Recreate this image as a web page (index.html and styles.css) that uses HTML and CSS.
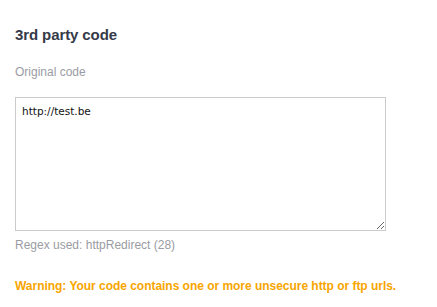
FILE: index.html
```html
<!DOCTYPE html>
<html>
<head>
<meta charset="utf-8">
<link rel="stylesheet" href="styles.css">
</head>
<body>
<div class="panel">
  <h2 class="title">3rd party code</h2>
  <label class="label" for="code">Original code</label>
  <textarea id="code" class="code">http://test.be</textarea>
  <div class="hint">Regex used: httpRedirect (28)</div>
  <div class="warning">Warning: Your code contains one or more unsecure http or ftp urls.</div>
</div>
</body>
</html>
```
FILE: styles.css
```css
html, body {
  margin: 0;
  padding: 0;
  background: #fff;
}
.panel {
  padding: 27px 15px 0 15px;
  font-family: "Liberation Sans", Arial, sans-serif;
  display: flex;
  flex-direction: column;
  align-items: flex-start;
}
.title {
  margin: 0;
  font-size: 15px;
  font-weight: bold;
  color: #353a48;
  line-height: 15px;
  letter-spacing: -0.1px;
}
.label {
  margin-top: 23px;
  font-size: 12px;
  color: #9a9ca3;
  line-height: 14px;
}
.code {
  margin: 18px 0 0 0;
  box-sizing: border-box;
  width: 371px;
  height: 134px;
  border: 1px solid #cbcbcb;
  padding: 7px 6px;
  font-family: "DejaVu Sans", sans-serif;
  font-size: 10.5px;
  color: #111;
  resize: both;
  outline: none;
}
.hint {
  margin-top: 7px;
  font-size: 12px;
  color: #9a9ca3;
  line-height: 14px;
}
.warning {
  margin-top: 27px;
  font-size: 12px;
  font-weight: bold;
  color: #f7a500;
  line-height: 14px;
  letter-spacing: -0.03px;
}
```
